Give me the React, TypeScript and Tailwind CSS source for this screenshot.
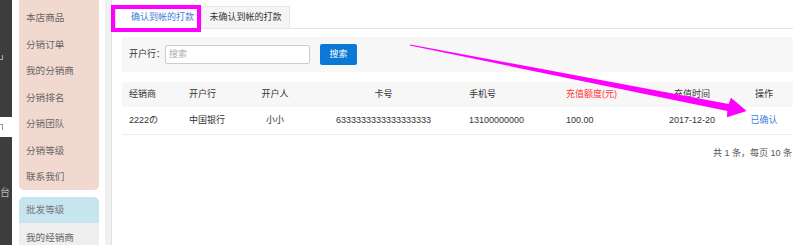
import React from "react";

const sideItems = ["本店商品", "分销订单", "我的分销商", "分销排名", "分销团队", "分销等级", "联系我们"];

const cols = [
  { w: "w-[60px]", align: "pl-[7px]" },
  { w: "w-[63px]", align: "pl-[7px]" },
  { w: "w-[60px]", align: "justify-center" },
  { w: "w-[157px]", align: "justify-center" },
  { w: "w-[97px]", align: "pl-[7px]" },
  { w: "w-[81px]", align: "pl-[7px]" },
  { w: "w-[104px]", align: "justify-center" },
  { w: "w-[40px]", align: "justify-center" },
];

const headers = ["经销商", "开户行", "开户人", "卡号", "手机号", "充值额度(元)", "充值时间", "操作"];
const row = ["2222の", "中国银行", "小小", "6333333333333333333", "13100000000", "100.00", "2017-12-20", "已确认"];

export default function App() {
  return (
    <div className="relative flex h-[245px] w-[793px] overflow-hidden bg-white font-['Liberation_Sans','Noto_Sans_CJK_SC',sans-serif] text-[9px] text-[#333]">
      {/* dark nav strip, mostly cut off */}
      <div className="flex w-[12px] shrink-0 flex-col bg-[#3d3d3d]">
        <div className="h-[117px] shrink-0 pt-[55px]">
          <div className="h-[5px] w-[3px] border-b border-r border-[#aaa]" />
        </div>
        <div className="flex h-[20px] shrink-0 items-center bg-white">
          <div className="h-[6px] w-[3px] border-t border-r border-[#999]" />
        </div>
        <div className="flex-1 pt-[50px] text-[10px] leading-[12px] text-[#bbb]">台</div>
      </div>
      <div className="w-[7px] shrink-0" />

      {/* sidebar menu */}
      <div className="flex w-[80px] shrink-0 flex-col text-[9.6px] text-[#666]">
        <div className="h-[190px] shrink-0 rounded-b-[5px] bg-[#f2d9cf] pt-[5px]">
          {sideItems.map((t) => (
            <div key={t} className="flex h-[26.5px] items-center pl-[7px]">
              {t}
            </div>
          ))}
        </div>
        <div className="mt-[7px] flex h-[26px] shrink-0 items-center rounded-t-[5px] bg-[#c6e5ef] pl-[7px] text-[#777]">
          批发等级
        </div>
        <div className="flex flex-1 items-start bg-[#eeeeee] pl-[7px] pt-[8px]">我的经销商</div>
      </div>
      <div className="w-[6px] shrink-0" />
      <div className="w-[7px] shrink-0 border-r border-[#e2e2e2] bg-[#f1f1f1]" />

      {/* main content */}
      <div className="flex min-w-0 flex-1 flex-col">
        <div className="flex border-b border-[#e5e5e5] pl-[3px] pt-[6px]">
          <div className="-mb-px flex h-[23px] w-[86px] items-center border border-b-white border-[#e5e5e5] bg-white pl-[15px] text-[#3a7bd5]">
            确认到帐的打款
          </div>
          <div className="-mb-px flex h-[23px] w-[89px] items-center justify-center border border-[#e5e5e5] bg-[#f5f5f5]">
            未确认到帐的打款
          </div>
        </div>

        <div className="ml-[10px] mt-[8px] flex h-[35px] items-center bg-[#f7f7f7] pl-[7px]">
          <span className="w-[36px]">开户行：</span>
          <div className="flex h-[19px] w-[145px] items-center rounded-[2px] border border-[#ccc] bg-white pl-[3px] text-[#aaa]">
            搜索
          </div>
          <div className="ml-[10px] flex h-[21px] w-[37px] items-center justify-center rounded-[2px] bg-[#0b78d6] text-white">
            搜索
          </div>
        </div>

        <div className="ml-[10px] mt-[10px]">
          <div className="flex h-[25px] bg-[#f7f7f7]">
            {headers.map((h, i) => (
              <div
                key={h}
                className={`flex items-center whitespace-nowrap ${cols[i].w} ${cols[i].align} ${i === 5 ? "text-[#f33]" : ""}`}
              >
                {h}
              </div>
            ))}
          </div>
          <div className="flex h-[28px] border-b border-[#eeeeee]">
            {row.map((c, i) => (
              <div
                key={c}
                className={`flex items-center whitespace-nowrap ${cols[i].w} ${cols[i].align} ${i === 7 ? "text-[#3b7fe0]" : ""}`}
              >
                {c}
              </div>
            ))}
          </div>
          <div className="mt-[12px] whitespace-nowrap pl-[591px] text-[#555]">共 1 条，每页 10 条</div>
        </div>
      </div>

      {/* annotation: highlight box */}
      <div className="absolute left-[111px] top-[5px] h-[27px] w-[90px] border-[4px] border-[#f0f]" />

      {/* annotation: arrow */}
      <svg className="pointer-events-none absolute left-0 top-0" width="793" height="245" viewBox="0 0 793 245">
        <polygon
          points="410.1,44.4 728.7,104.1 731,97.7 746.7,111 727,117.3 727.3,110.9 409.9,45.6"
          fill="#f0f"
        />
      </svg>
    </div>
  );
}
